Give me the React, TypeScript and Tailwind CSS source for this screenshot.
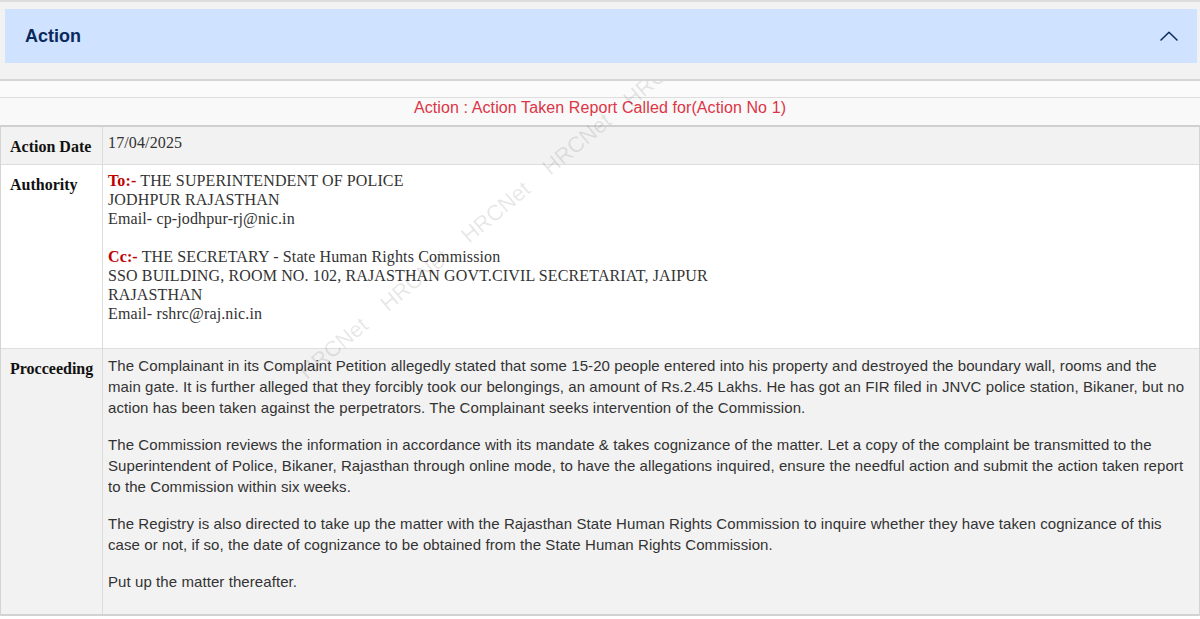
import React from "react";

const serif = "font-['Liberation_Serif','Times_New_Roman',serif]";
const sans = "font-['Liberation_Sans',Arial,sans-serif]";

function ChevronUp() {
  return (
    <svg width="18" height="10" viewBox="0 0 18 10" fill="none" aria-hidden="true">
      <polyline
        points="1,9 9,1.2 17,9"
        stroke="#0b2a5b"
        strokeWidth="1.5"
        strokeLinecap="round"
        strokeLinejoin="round"
      />
    </svg>
  );
}

// faint diagonal "HRCNet" watermark laid over the page
function Watermark() {
  const words = Array.from({ length: 7 });
  return (
    <div
      className={`pointer-events-none absolute left-[302px] top-[358px] z-0 origin-left -rotate-[40deg] whitespace-nowrap text-[22px] text-black/10 ${sans}`}
    >
      {words.map((_, i) => (
        <span key={i} className="mr-[24px] inline-block">
          HRCNet
        </span>
      ))}
    </div>
  );
}

interface RowProps {
  label: string;
  bg: string;
  children: React.ReactNode;
  last?: boolean;
}

function Row({ label, bg, children, last }: RowProps) {
  return (
    <div
      className={`flex ${bg} ${last ? "border-b-2 border-[#d2d2d2]" : "border-b border-[#dedede]"}`}
    >
      <div
        className={`w-[102px] shrink-0 border-r border-[#dcdcdc] pt-[10px] pb-[8px] pl-[9px] text-[16px] leading-[19px] font-bold text-[#111] ${serif}`}
      >
        {label}
      </div>
      <div className="min-w-0 flex-1 pl-[5px] pr-[8px] pt-[6px] pb-[6px]">{children}</div>
    </div>
  );
}

export default function App() {
  return (
    <div className={`relative h-[619px] w-full overflow-hidden bg-white ${sans}`}>
      {/* Accordion header */}
      <div className="relative z-10 border-t-2 border-b-2 border-t-[#dcdcdc] border-b-[#d6d6d6] bg-[#f2f2f2] pt-[7px] pb-4 pl-[5px] pr-[3px]">
        <div className="flex h-[54px] items-center justify-between bg-[#cfe2ff] pl-5 pr-[19px]">
          <span className="text-[18px] font-bold text-[#0b2a5b]">Action</span>
          <ChevronUp />
        </div>
      </div>

      <div className="h-[17px] border-b border-[#dedede] bg-[#fbfbfb]" />

      <div className="h-[29px] border-b-2 border-[#d0d0d0] bg-[#f9f9fa] pt-px text-center text-[16px] leading-[18px] tracking-[0.1px] text-[#dc3545]">
        Action : Action Taken Report Called for(Action No 1)
      </div>

      {/* Details table */}
      <div className="border-l border-r border-[#d4d4d4]">
        <Row label="Action Date" bg="bg-[#f2f2f2]">
          <div className={`text-[16px] leading-[19px] tracking-[0.13px] text-[#333] ${serif}`}>17/04/2025</div>
        </Row>

        <Row label="Authority" bg="bg-white">
          <div className={`text-[16px] leading-[19px] tracking-[0.13px] text-[#333] ${serif}`}>
            <div>
              <span className="font-bold text-[#c00000]">To:-</span> THE SUPERINTENDENT OF POLICE
            </div>
            <div>JODHPUR RAJASTHAN</div>
            <div>Email- cp-jodhpur-rj@nic.in</div>
            <div className="h-[19px]" />
            <div>
              <span className="font-bold text-[#c00000]">Cc:-</span> THE SECRETARY - State Human Rights Commission
            </div>
            <div>SSO BUILDING, ROOM NO. 102, RAJASTHAN GOVT.CIVIL SECRETARIAT, JAIPUR</div>
            <div>RAJASTHAN</div>
            <div>Email- rshrc@raj.nic.in</div>
            <div className="h-[19px]" />
          </div>
        </Row>

        <Row label="Procceeding" bg="bg-[#f2f2f2]" last>
          <div className="text-[15px] leading-[21px] tracking-[0.08px] text-[#333]">
            <p className="mb-4">
              The Complainant in its Complaint Petition allegedly stated that some 15-20 people entered into his
              property and destroyed the boundary wall, rooms and the main gate. It is further alleged that they
              forcibly took our belongings, an amount of Rs.2.45 Lakhs. He has got an FIR filed in JNVC police
              station, Bikaner, but no action has been taken against the perpetrators. The Complainant seeks
              intervention of the Commission.
            </p>
            <p className="mb-4">
              The Commission reviews the information in accordance with its mandate &amp; takes cognizance of the
              matter. Let a copy of the complaint be transmitted to the Superintendent of Police, Bikaner, Rajasthan
              through online mode, to have the allegations inquired, ensure the needful action and submit the action
              taken report to the Commission within six weeks.
            </p>
            <p className="mb-4">
              The Registry is also directed to take up the matter with the Rajasthan State Human Rights Commission
              to inquire whether they have taken cognizance of this case or not, if so, the date of cognizance to be
              obtained from the State Human Rights Commission.
            </p>
            <p className="mb-4">Put up the matter thereafter.</p>
          </div>
        </Row>
      </div>

      <Watermark />
    </div>
  );
}
